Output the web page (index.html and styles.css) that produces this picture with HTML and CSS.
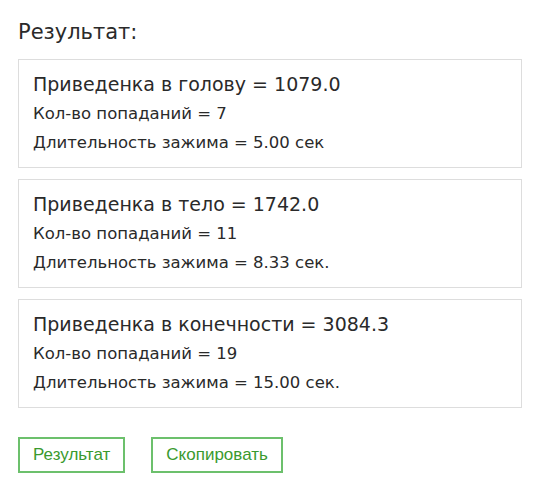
FILE: index.html
```html
<!DOCTYPE html>
<html lang="ru">
<head>
	<meta charset="UTF-8">
	<title>Результат</title>
	<link rel="stylesheet" href="styles.css">
</head>
<body>
	<div class="wrap">
		<h2 class="title">Результат:</h2>
		<div class="result">
			<div class="result-head">Приведенка в голову = 1079.0</div>
			<div class="result-line">Кол-во попаданий = 7</div>
			<div class="result-line">Длительность зажима = 5.00 сек</div>
		</div>
		<div class="result">
			<div class="result-head">Приведенка в тело = 1742.0</div>
			<div class="result-line">Кол-во попаданий = 11</div>
			<div class="result-line">Длительность зажима = 8.33 сек.</div>
		</div>
		<div class="result">
			<div class="result-head">Приведенка в конечности = 3084.3</div>
			<div class="result-line">Кол-во попаданий = 19</div>
			<div class="result-line">Длительность зажима = 15.00 сек.</div>
		</div>
		<div class="buttons">
			<button class="btn">Результат</button>
			<button class="btn">Скопировать</button>
		</div>
	</div>
</body>
</html>
```

FILE: styles.css
```css
*{
	margin: 0;
	padding: 0;
}
body{
	background: #fff;
	color: #2a2a2a;
	font-family: "DejaVu Sans", "Open Sans", sans-serif;
}
.wrap{
	width: 504px;
	padding: 18px 0 0 18px;
}
.title{
	font-size: 21px;
	font-weight: 400;
	line-height: 28px;
	margin-bottom: 13px;
}
.result{
	border: 1px solid #ddd;
	padding: 9px 14px 10px;
	margin-bottom: 11px;
}
.result-head{
	font-size: 19px;
	line-height: 30px;
}
.result-line{
	font-size: 16.5px;
	line-height: 29px;
}
.buttons{
	display: flex;
	gap: 26px;
	margin-top: 29px;
}
.btn{
	background: #fff;
	border: 2px solid #6cc06c;
	color: #3a9a2e;
	font-family: "Liberation Sans", Arial, sans-serif;
	font-size: 17px;
	height: 36px;
	padding: 0 13px;
}
```
